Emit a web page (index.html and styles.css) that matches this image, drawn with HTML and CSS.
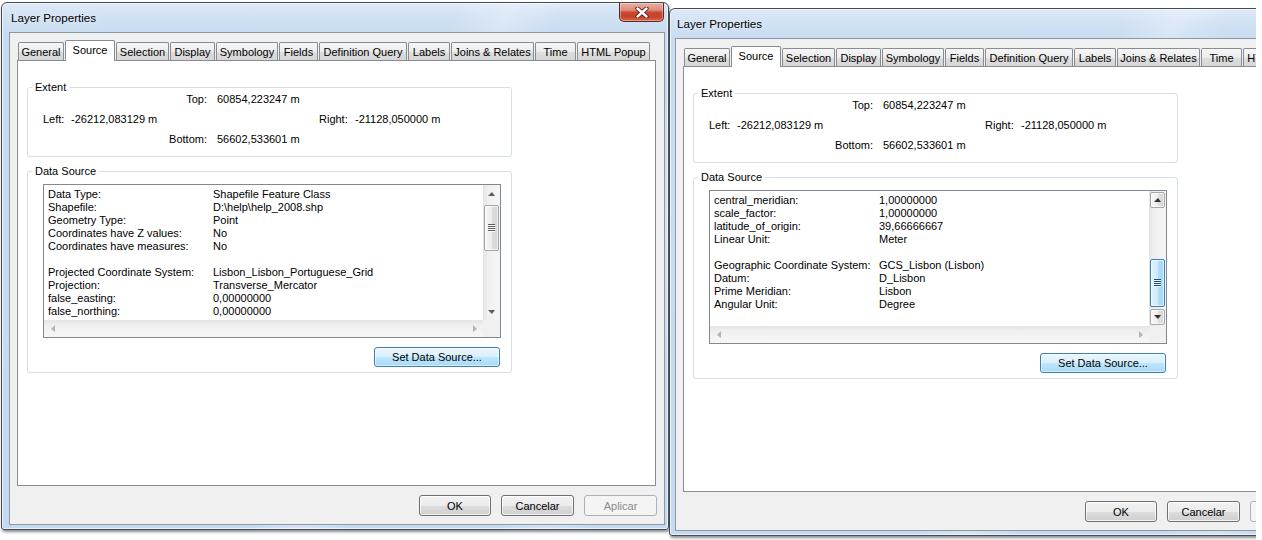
FILE: index.html
```html
<!DOCTYPE html>
<html>
<head>
<meta charset="utf-8">
<title>Layer Properties</title>
<link rel="stylesheet" href="styles.css">
</head>
<body>
<div class="desk">
  <div class="win win-a">
    <div class="titlebar"><span class="title">Layer Properties</span></div>
    <div class="close">
      <svg width="14" height="11" viewBox="0 0 14 11"><path d="M2.5 1.5 L11.5 9.5 M11.5 1.5 L2.5 9.5" stroke="#4b1c14" stroke-width="4.2" stroke-linecap="round"/><path d="M2.5 1.5 L11.5 9.5 M11.5 1.5 L2.5 9.5" stroke="#ffffff" stroke-width="2.4" stroke-linecap="round"/></svg>
    </div>
    <div class="client">
      <div class="tabs">
        <div class="tab w-general">General</div>
        <div class="tab sel w-source">Source</div>
        <div class="tab w-selection">Selection</div>
        <div class="tab w-display">Display</div>
        <div class="tab w-symbology">Symbology</div>
        <div class="tab w-fields">Fields</div>
        <div class="tab w-defq">Definition Query</div>
        <div class="tab w-labels">Labels</div>
        <div class="tab w-joins">Joins &amp; Relates</div>
        <div class="tab w-time">Time</div>
        <div class="tab w-html">HTML Popup</div>
      </div>
      <div class="page">
        <div class="group extent">
          <span class="legend">Extent</span>
          <div class="erow"><span class="lbl-r">Top:</span><span>60854,223247 m</span></div>
          <div class="erow"><span class="lbl-left">Left:</span><span class="val-left">-26212,083129 m</span><span class="lbl-right">Right:</span><span>-21128,050000 m</span></div>
          <div class="erow"><span class="lbl-r">Bottom:</span><span>56602,533601 m</span></div>
        </div>
        <div class="group dsrc">
          <span class="legend">Data Source</span>
          <div class="listbox">
            <div class="lb-content">
              <div class="lrow"><span class="k">Data Type:</span><span>Shapefile Feature Class</span></div>
              <div class="lrow"><span class="k">Shapefile:</span><span>D:\help\help_2008.shp</span></div>
              <div class="lrow"><span class="k">Geometry Type:</span><span>Point</span></div>
              <div class="lrow"><span class="k">Coordinates have Z values:</span><span>No</span></div>
              <div class="lrow"><span class="k">Coordinates have measures:</span><span>No</span></div>
              <div class="lrow"></div>
              <div class="lrow"><span class="k">Projected Coordinate System:</span><span>Lisbon_Lisbon_Portuguese_Grid</span></div>
              <div class="lrow"><span class="k">Projection:</span><span>Transverse_Mercator</span></div>
              <div class="lrow"><span class="k">false_easting:</span><span>0,00000000</span></div>
              <div class="lrow"><span class="k">false_northing:</span><span>0,00000000</span></div>
            </div>
            <div class="vs">
              <div class="sbtn"><span class="ar ar-up"></span></div>
              <div class="track"><div class="thumb thumb-top"><span class="grip"></span></div></div>
              <div class="sbtn"><span class="ar ar-down"></span></div>
            </div>
            <div class="hs">
              <div class="sbtn-h"><span class="ar ar-left"></span></div>
              <div class="track"></div>
              <div class="sbtn-h"><span class="ar ar-right"></span></div>
            </div>
            <div class="corner"></div>
          </div>
          <div class="ds-actions"><button class="btn btn-default">Set Data Source...</button></div>
        </div>
      </div>
      <div class="actions">
        <button class="btn w-ok">OK</button>
        <button class="btn w-btn">Cancelar</button>
        <button class="btn w-btn" disabled>Aplicar</button>
      </div>
    </div>
  </div>

  <div class="clip">
    <div class="win win-b">
      <div class="titlebar"><span class="title">Layer Properties</span></div>
      <div class="client">
        <div class="tabs">
          <div class="tab w-general">General</div>
          <div class="tab sel w-source">Source</div>
          <div class="tab w-selection">Selection</div>
          <div class="tab w-display">Display</div>
          <div class="tab w-symbology">Symbology</div>
          <div class="tab w-fields">Fields</div>
          <div class="tab w-defq">Definition Query</div>
          <div class="tab w-labels">Labels</div>
          <div class="tab w-joins">Joins &amp; Relates</div>
          <div class="tab w-time">Time</div>
          <div class="tab w-html">HTML Popup</div>
        </div>
        <div class="page">
          <div class="group extent">
            <span class="legend">Extent</span>
            <div class="erow"><span class="lbl-r">Top:</span><span>60854,223247 m</span></div>
            <div class="erow"><span class="lbl-left">Left:</span><span class="val-left">-26212,083129 m</span><span class="lbl-right">Right:</span><span>-21128,050000 m</span></div>
            <div class="erow"><span class="lbl-r">Bottom:</span><span>56602,533601 m</span></div>
          </div>
          <div class="group dsrc">
            <span class="legend">Data Source</span>
            <div class="listbox">
              <div class="lb-content">
                <div class="lrow"><span class="k">central_meridian:</span><span>1,00000000</span></div>
                <div class="lrow"><span class="k">scale_factor:</span><span>1,00000000</span></div>
                <div class="lrow"><span class="k">latitude_of_origin:</span><span>39,66666667</span></div>
                <div class="lrow"><span class="k">Linear Unit:</span><span>Meter</span></div>
                <div class="lrow"></div>
                <div class="lrow"><span class="k">Geographic Coordinate System:</span><span>GCS_Lisbon (Lisbon)</span></div>
                <div class="lrow"><span class="k">Datum:</span><span>D_Lisbon</span></div>
                <div class="lrow"><span class="k">Prime Meridian:</span><span>Lisbon</span></div>
                <div class="lrow"><span class="k">Angular Unit:</span><span>Degree</span></div>
              </div>
              <div class="vs vs-hot">
                <div class="sbtn"><span class="ar ar-up"></span></div>
                <div class="track"><div class="thumb thumb-mid"><span class="grip"></span></div></div>
                <div class="sbtn"><span class="ar ar-down"></span></div>
              </div>
              <div class="hs">
                <div class="sbtn-h"><span class="ar ar-left"></span></div>
                <div class="track"></div>
                <div class="sbtn-h"><span class="ar ar-right"></span></div>
              </div>
              <div class="corner"></div>
            </div>
            <div class="ds-actions"><button class="btn btn-default">Set Data Source...</button></div>
          </div>
        </div>
        <div class="actions">
          <button class="btn w-ok">OK</button>
          <button class="btn w-btn">Cancelar</button>
          <button class="btn w-btn" disabled>Aplicar</button>
        </div>
      </div>
    </div>
  </div>
</div>
</body>
</html>
```

FILE: styles.css
```css
* { box-sizing: border-box; }
html, body { margin: 0; padding: 0; }
body {
  width: 1262px;
  height: 540px;
  overflow: hidden;
  background: #ffffff;
  font-family: "Liberation Sans", Arial, sans-serif;
  font-size: 11px;
  color: #000;
}
.desk {
  display: flex;
  align-items: flex-start;
  padding: 2px 0 0 1px;
  height: 540px;
}

/* ---------- window frame ---------- */
.win {
  position: relative;
  flex: none;
  width: 668px;
  height: 528px;
  border: 1px solid #474c53;
  border-radius: 6px 6px 3px 3px;
  display: flex;
  flex-direction: column;
  background:
    linear-gradient(112deg, rgba(255,255,255,0) 0, rgba(255,255,255,0) 52%, rgba(255,255,255,.28) 58%, rgba(255,255,255,0) 64%, rgba(255,255,255,0) 80%, rgba(255,255,255,.22) 86%, rgba(255,255,255,0) 92%),
    linear-gradient(180deg, #dfeaf7 0, #d2e2f4 12px, #c8dcf1 30px, #c5daf0 100%);
  box-shadow: inset 0 0 0 1px rgba(255,255,255,.6), 1px 2px 3px rgba(0,0,0,.45);
}
.win-a { padding: 0 3px 4px 7px; }
.win-b { padding: 0 5px 4px 5px; }
.clip {
  flex: none;
  width: 587px;
  height: 532px;
  margin-top: 6px;
  overflow: hidden;
}
.titlebar {
  flex: none;
  height: 29px;
  display: flex;
  align-items: center;
  padding-left: 2px;
}
.title {
  font-size: 11.6px;
  color: #000;
  text-shadow: 0 0 6px rgba(255,255,255,.9);
}
.close {
  position: absolute;
  top: 0;
  right: 4px;
  width: 45px;
  height: 19px;
  border: 1px solid #5b2a22;
  border-top: none;
  border-radius: 0 0 5px 5px;
  background: linear-gradient(180deg, #e9b0a4 0, #dc8b7c 40%, #c9482f 52%, #c4422a 75%, #db6446 100%);
  box-shadow: inset 0 0 0 1px rgba(255,255,255,.35);
  display: flex;
  align-items: center;
  justify-content: center;
}

/* ---------- client area ---------- */
.client {
  flex: none;
  width: 656px;
  height: 493px;
  border: 1px solid #8d98a5;
  background: #f0f0f0;
  padding: 7px 8px 8px 7px;
  display: flex;
  flex-direction: column;
}
.tabs {
  flex: none;
  height: 20px;
  display: flex;
  align-items: flex-end;
  padding-left: 1px;
}
.tab {
  flex: none;
  height: 18px;
  margin-right: 1px;
  border: 1px solid #898c95;
  border-bottom: none;
  border-radius: 2px 2px 0 0;
  background: linear-gradient(180deg, #f6f6f6 0, #ececec 50%, #dedede 51%, #d6d6d6 100%);
  display: flex;
  align-items: center;
  justify-content: center;
  white-space: nowrap;
  line-height: 14px;
}
.tab.sel {
  height: 21px;
  margin-bottom: -1px;
  background: #fff;
  position: relative;
  z-index: 1;
  padding-bottom: 3px;
}
.w-general { width: 46px; }
.w-source { width: 50px; }
.w-selection { width: 53px; }
.w-display { width: 45px; }
.w-symbology { width: 62px; }
.w-fields { width: 39px; }
.w-defq { width: 88px; }
.w-labels { width: 42px; }
.w-joins { width: 83px; }
.w-time { width: 41px; }
.w-html { width: 73px; }

.page {
  flex: none;
  height: 426px;
  border: 1px solid #898c95;
  background: #fff;
}

/* ---------- group boxes ---------- */
.group {
  position: relative;
  margin-left: 9px;
  width: 485px;
  border: 1px solid #d5dfe5;
  border-radius: 3px;
}
.legend {
  position: absolute;
  top: -8px;
  left: 4px;
  padding: 0 3px;
  line-height: 14px;
  background: #fff;
}
.extent {
  margin-top: 26px;
  height: 70px;
  padding-top: 4px;
}
.erow {
  display: flex;
  height: 20px;
  line-height: 14px;
  white-space: nowrap;
}
.lbl-r { width: 179px; text-align: right; margin-right: 10px; }
.lbl-left { margin-left: 15px; width: 28px; }
.val-left { width: 248px; }
.lbl-right { width: 36px; }

.dsrc {
  margin-top: 14px;
  height: 202px;
  padding: 12px 0 0 15px;
}

/* ---------- listbox ---------- */
.listbox {
  width: 458px;
  height: 154px;
  border: 1px solid #828790;
  background: #fff;
  display: grid;
  grid-template-columns: 439px 17px;
  grid-template-rows: 135px 17px;
}
.lb-content {
  padding: 3px 0 0 4px;
  overflow: hidden;
  line-height: 13px;
}
.lrow {
  display: flex;
  height: 13px;
  white-space: nowrap;
}
.lrow .k { width: 165px; flex: none; }

.vs {
  display: flex;
  flex-direction: column;
  background: linear-gradient(90deg, #e4e4e4 0, #eeeeee 25%, #f3f3f3 60%, #f6f6f6 100%);
}
.sbtn {
  flex: none;
  height: 17px;
  display: flex;
  align-items: center;
  justify-content: center;
}
.track { flex: 1; }
.thumb {
  margin: 0 1px;
  border: 1px solid #a3a3a3;
  border-radius: 2px;
  background: linear-gradient(90deg, #f7f7f7 0, #ececec 50%, #dedede 51%, #d4d4d4 100%);
  box-shadow: inset 0 0 0 1px rgba(255,255,255,.7);
  display: flex;
  align-items: center;
  justify-content: center;
}
.thumb-top { margin-top: 3px; height: 46px; }
.thumb-mid { margin-top: 51px; height: 48px; }
.grip {
  width: 7px;
  height: 8px;
  background: repeating-linear-gradient(180deg, #5e5e5e 0, #5e5e5e 1px, #fbfbfb 1px, #fbfbfb 2px);
}
.vs-hot .sbtn {
  height: 16px;
  margin: 1px 1px 0 1px;
  border: 1px solid #a7a7a7;
  border-radius: 2px;
  background: linear-gradient(90deg, #f8f8f8 0, #ededed 50%, #e0e0e0 51%, #d6d6d6 100%);
  box-shadow: inset 0 0 0 1px rgba(255,255,255,.7);
}
.vs-hot .sbtn:last-child { margin: 0 1px 1px 1px; }
.vs-hot .thumb {
  border-color: #3c7fb1;
  background: linear-gradient(90deg, #e3f4fc 0, #cdebfb 50%, #b1dff8 51%, #a4d6f5 100%);
}
.vs-hot .grip {
  background: repeating-linear-gradient(180deg, #1c4e70 0, #1c4e70 1px, #e8f6fd 1px, #e8f6fd 2px);
}
.vs-hot .ar-up { border-bottom-color: #303030; }
.vs-hot .ar-down { border-top-color: #303030; }

.hs {
  display: flex;
  background: linear-gradient(180deg, #e4e4e4 0, #eeeeee 25%, #f3f3f3 60%, #f6f6f6 100%);
}
.sbtn-h {
  flex: none;
  width: 17px;
  display: flex;
  align-items: center;
  justify-content: center;
}
.corner { background: #f0f0f0; }

.ar { width: 0; height: 0; display: block; }
.ar-up { border-left: 4px solid transparent; border-right: 3px solid transparent; border-bottom: 4px solid #5f5f5f; }
.ar-down { border-left: 4px solid transparent; border-right: 3px solid transparent; border-top: 4px solid #5f5f5f; }
.ar-left { border-top: 4px solid transparent; border-bottom: 3px solid transparent; border-right: 4px solid #b4b4b4; }
.ar-right { border-top: 4px solid transparent; border-bottom: 3px solid transparent; border-left: 4px solid #b4b4b4; }

/* ---------- buttons ---------- */
.btn {
  font-family: "Liberation Sans", Arial, sans-serif;
  font-size: 11px;
  color: #000;
  padding: 0;
  height: 21px;
  border: 1px solid #707070;
  border-radius: 3px;
  background: linear-gradient(180deg, #f2f2f2 0, #ebebeb 50%, #dddddd 51%, #cfcfcf 100%);
  box-shadow: inset 0 0 0 1px rgba(255,255,255,.75);
}
.btn:disabled {
  color: #8a8a8a;
  border-color: #adb2b5;
  background: #f4f4f4;
  box-shadow: none;
}
.btn-default {
  width: 126px;
  height: 20px;
  border-color: #3c7fb1;
  background: linear-gradient(180deg, #eaf6fd 0, #d9f0fc 50%, #bee6fd 51%, #a7d9f5 100%);
  box-shadow: inset 0 0 0 1px rgba(255,255,255,.55);
}
.ds-actions {
  width: 458px;
  margin-top: 9px;
  display: flex;
  justify-content: flex-end;
  padding-right: 1px;
}
.actions {
  flex: none;
  margin-top: 9px;
  margin-right: -1px;
  display: flex;
  justify-content: flex-end;
  gap: 10px;
}
.w-ok { width: 72px; }
.w-btn { width: 73px; }
```
